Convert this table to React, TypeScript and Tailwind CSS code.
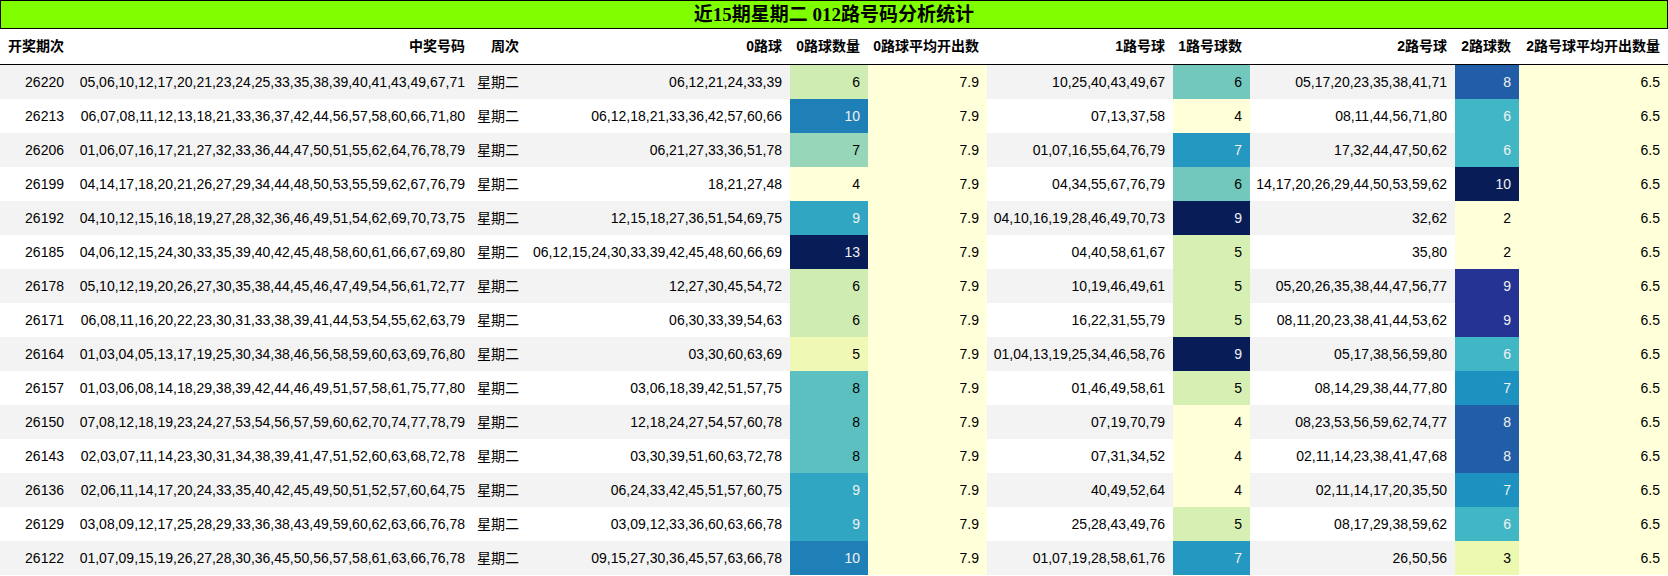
import React from "react";

type Row = {
  issue: string;
  nums: string;
  week: string;
  r0: string;
  c0: number;
  r1: string;
  c1: number;
  r2: string;
  c2: number;
};

const rows: Row[] = [
  { issue: "26220", nums: "05,06,10,12,17,20,21,23,24,25,33,35,38,39,40,41,43,49,67,71", week: "星期二", r0: "06,12,21,24,33,39", c0: 6, r1: "10,25,40,43,49,67", c1: 6, r2: "05,17,20,23,35,38,41,71", c2: 8 },
  { issue: "26213", nums: "06,07,08,11,12,13,18,21,33,36,37,42,44,56,57,58,60,66,71,80", week: "星期二", r0: "06,12,18,21,33,36,42,57,60,66", c0: 10, r1: "07,13,37,58", c1: 4, r2: "08,11,44,56,71,80", c2: 6 },
  { issue: "26206", nums: "01,06,07,16,17,21,27,32,33,36,44,47,50,51,55,62,64,76,78,79", week: "星期二", r0: "06,21,27,33,36,51,78", c0: 7, r1: "01,07,16,55,64,76,79", c1: 7, r2: "17,32,44,47,50,62", c2: 6 },
  { issue: "26199", nums: "04,14,17,18,20,21,26,27,29,34,44,48,50,53,55,59,62,67,76,79", week: "星期二", r0: "18,21,27,48", c0: 4, r1: "04,34,55,67,76,79", c1: 6, r2: "14,17,20,26,29,44,50,53,59,62", c2: 10 },
  { issue: "26192", nums: "04,10,12,15,16,18,19,27,28,32,36,46,49,51,54,62,69,70,73,75", week: "星期二", r0: "12,15,18,27,36,51,54,69,75", c0: 9, r1: "04,10,16,19,28,46,49,70,73", c1: 9, r2: "32,62", c2: 2 },
  { issue: "26185", nums: "04,06,12,15,24,30,33,35,39,40,42,45,48,58,60,61,66,67,69,80", week: "星期二", r0: "06,12,15,24,30,33,39,42,45,48,60,66,69", c0: 13, r1: "04,40,58,61,67", c1: 5, r2: "35,80", c2: 2 },
  { issue: "26178", nums: "05,10,12,19,20,26,27,30,35,38,44,45,46,47,49,54,56,61,72,77", week: "星期二", r0: "12,27,30,45,54,72", c0: 6, r1: "10,19,46,49,61", c1: 5, r2: "05,20,26,35,38,44,47,56,77", c2: 9 },
  { issue: "26171", nums: "06,08,11,16,20,22,23,30,31,33,38,39,41,44,53,54,55,62,63,79", week: "星期二", r0: "06,30,33,39,54,63", c0: 6, r1: "16,22,31,55,79", c1: 5, r2: "08,11,20,23,38,41,44,53,62", c2: 9 },
  { issue: "26164", nums: "01,03,04,05,13,17,19,25,30,34,38,46,56,58,59,60,63,69,76,80", week: "星期二", r0: "03,30,60,63,69", c0: 5, r1: "01,04,13,19,25,34,46,58,76", c1: 9, r2: "05,17,38,56,59,80", c2: 6 },
  { issue: "26157", nums: "01,03,06,08,14,18,29,38,39,42,44,46,49,51,57,58,61,75,77,80", week: "星期二", r0: "03,06,18,39,42,51,57,75", c0: 8, r1: "01,46,49,58,61", c1: 5, r2: "08,14,29,38,44,77,80", c2: 7 },
  { issue: "26150", nums: "07,08,12,18,19,23,24,27,53,54,56,57,59,60,62,70,74,77,78,79", week: "星期二", r0: "12,18,24,27,54,57,60,78", c0: 8, r1: "07,19,70,79", c1: 4, r2: "08,23,53,56,59,62,74,77", c2: 8 },
  { issue: "26143", nums: "02,03,07,11,14,23,30,31,34,38,39,41,47,51,52,60,63,68,72,78", week: "星期二", r0: "03,30,39,51,60,63,72,78", c0: 8, r1: "07,31,34,52", c1: 4, r2: "02,11,14,23,38,41,47,68", c2: 8 },
  { issue: "26136", nums: "02,06,11,14,17,20,24,33,35,40,42,45,49,50,51,52,57,60,64,75", week: "星期二", r0: "06,24,33,42,45,51,57,60,75", c0: 9, r1: "40,49,52,64", c1: 4, r2: "02,11,14,17,20,35,50", c2: 7 },
  { issue: "26129", nums: "03,08,09,12,17,25,28,29,33,36,38,43,49,59,60,62,63,66,76,78", week: "星期二", r0: "03,09,12,33,36,60,63,66,78", c0: 9, r1: "25,28,43,49,76", c1: 5, r2: "08,17,29,38,59,62", c2: 6 },
  { issue: "26122", nums: "01,07,09,15,19,26,27,28,30,36,45,50,56,57,58,61,63,66,76,78", week: "星期二", r0: "09,15,27,30,36,45,57,63,66,78", c0: 10, r1: "01,07,19,28,58,61,76", c1: 7, r2: "26,50,56", c2: 3 },
];

// YlGnBu gradient per column (light text on the dark end)
const grad0: Record<number, string> = {
  4: "bg-[#ffffd9] text-black",
  5: "bg-[#eff9b5] text-black",
  6: "bg-[#cfecb3] text-black",
  7: "bg-[#97d6b9] text-black",
  8: "bg-[#5cc0c0] text-black",
  9: "bg-[#31a6c2] text-[#f1f1f1]",
  10: "bg-[#1f80b8] text-[#f1f1f1]",
  13: "bg-[#081d58] text-[#f1f1f1]",
};

const grad1: Record<number, string> = {
  4: "bg-[#ffffd9] text-black",
  5: "bg-[#d6efb3] text-black",
  6: "bg-[#73c8bd] text-black",
  7: "bg-[#2498c1] text-[#f1f1f1]",
  9: "bg-[#081d58] text-[#f1f1f1]",
};

const grad2: Record<number, string> = {
  2: "bg-[#ffffd9] text-black",
  3: "bg-[#edf8b1] text-black",
  6: "bg-[#41b6c4] text-[#f1f1f1]",
  7: "bg-[#1d91c0] text-[#f1f1f1]",
  8: "bg-[#225ea8] text-[#f1f1f1]",
  9: "bg-[#253494] text-[#f1f1f1]",
  10: "bg-[#081d58] text-[#f1f1f1]",
};

const headers = [
  "开奖期次",
  "中奖号码",
  "周次",
  "0路球",
  "0路球数量",
  "0路球平均开出数",
  "1路号球",
  "1路号球数",
  "2路号球",
  "2路球数",
  "2路号球平均开出数量",
];

const widths = [72, 401, 54, 263, 78, 119, 186, 77, 205, 64, 149];

const td = "h-[34px] p-0 pr-[8px] text-right align-middle whitespace-nowrap";

export default function App() {
  return (
    <div className="w-[1668px] bg-white font-['Liberation_Sans','Noto_Sans_CJK_SC',sans-serif] text-[14px] text-black">
      <div className="h-[29px] border border-black bg-[#7fff00] text-center font-['Liberation_Serif','Noto_Sans_CJK_SC',serif] text-[19px] font-bold leading-[27px]">
        近15期星期二 012路号码分析统计
      </div>
      <table className="w-[1668px] table-fixed border-separate border-spacing-0">
        <colgroup>
          {widths.map((w, i) => (
            <col key={i} style={{ width: w }} />
          ))}
        </colgroup>
        <thead>
          <tr>
            {headers.map((h) => (
              <th key={h} className="h-[36px] border-b border-black p-0 pr-[8px] text-right align-middle font-bold whitespace-nowrap">
                {h}
              </th>
            ))}
          </tr>
        </thead>
        <tbody>
          {rows.map((r, i) => (
            <tr key={r.issue} className={i % 2 === 0 ? "bg-[#f3f3f3]" : "bg-white"}>
              <td className={td}>{r.issue}</td>
              <td className={td}>{r.nums}</td>
              <td className={td}>{r.week}</td>
              <td className={td}>{r.r0}</td>
              <td className={`${td} ${grad0[r.c0]}`}>{r.c0}</td>
              <td className={`${td} bg-[#ffffd9]`}>7.9</td>
              <td className={td}>{r.r1}</td>
              <td className={`${td} ${grad1[r.c1]}`}>{r.c1}</td>
              <td className={td}>{r.r2}</td>
              <td className={`${td} ${grad2[r.c2]}`}>{r.c2}</td>
              <td className={`${td} bg-[#ffffd9]`}>6.5</td>
            </tr>
          ))}
        </tbody>
      </table>
    </div>
  );
}
